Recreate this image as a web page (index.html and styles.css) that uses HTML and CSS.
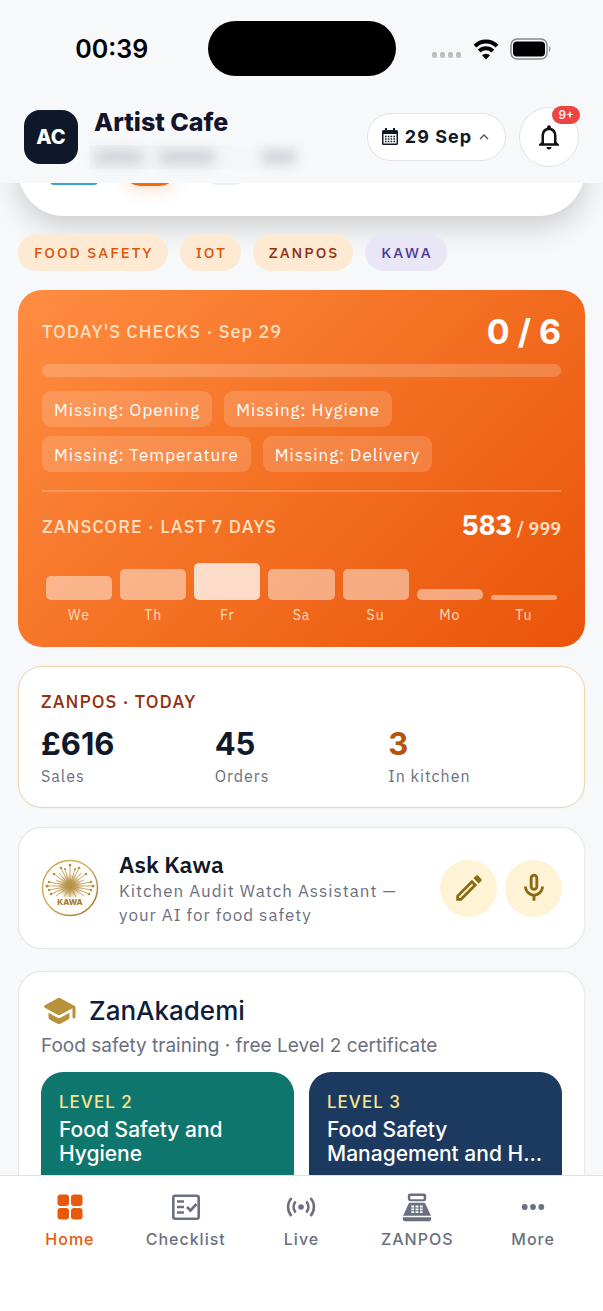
FILE: index.html
```html
<!DOCTYPE html>
<html lang="en">
<head>
<meta charset="utf-8">
<meta name="viewport" content="width=device-width, initial-scale=1">
<title>Artist Cafe</title>
<link rel="stylesheet" href="styles.css">
</head>
<body>
<div class="status">
  <div class="status-side"><time class="clock">00:39</time></div>
  <div class="island"></div>
  <div class="status-side status-icons">
    <svg width="30" height="6" viewBox="0 0 30 6" fill="#bfc0c2"><rect width="5" height="6" rx="2"/><rect x="8" width="5" height="6" rx="2"/><rect x="16" width="5" height="6" rx="2"/><rect x="24" width="5" height="6" rx="2"/></svg>
    <svg class="wifi" width="26" height="22" viewBox="0 0 26 22" fill="none" stroke="#000" stroke-width="4"><path d="M2 8.200a15.500 15.500 0 0 1 22 0"/><path d="M6.200 13a9.600 9.600 0 0 1 13.600 0"/><path d="M13 21.500l-4-4.200a6 6 0 0 1 8 0z" fill="#000" stroke="none"/></svg>
    <svg class="battery" width="42" height="22" viewBox="0 0 42 22"><rect x="1" y="1" width="36" height="20" rx="6" fill="none" stroke="#87898b" stroke-width="1.500"/><rect x="3" y="3.500" width="32" height="15" rx="4"/><path d="M39 8q3 3 0 6z" fill="#87898b"/></svg>
  </div>
</div>

<header class="top">
  <div class="avatar">AC</div>
  <div class="who">
    <h1>Artist Cafe</h1>
    <div class="redacted" aria-hidden="true"><i></i><i></i><i></i></div>
  </div>
  <button class="date" type="button">
    <svg width="16" height="18" viewBox="0 0 16 18"><path d="M3 0h2v2h6V0h2v2h1.500A1.500 1.500 0 0 1 16 3.500v12a1.500 1.500 0 0 1-1.500 1.500h-13A1.500 1.500 0 0 1 0 15.500v-12A1.500 1.500 0 0 1 1.500 2H3zM1.500 6v9.500h13V6z" fill="#111827" fill-rule="evenodd"/><path d="M3 8.500h10M3 11h10M3 13.500h10" stroke="#111827" stroke-width="1.500" stroke-dasharray="1.600 1.200"/></svg>
    <span>29 Sep</span>
    <svg width="10" height="6" viewBox="0 0 10 6" fill="none" stroke="#4b5563" stroke-width="1.400"><path d="M1 5l4-4 4 4"/></svg>
  </button>
  <button class="bell" type="button" aria-label="Notifications">
    <svg width="30" height="30" viewBox="0 0 24 24" fill="#111"><path d="M12 22c1.100 0 2-.9 2-2h-4c0 1.100.89 2 2 2zm6-6v-5c0-3.070-1.640-5.640-4.500-6.320V4c0-.83-.67-1.500-1.500-1.500s-1.500.67-1.500 1.500v.68C7.630 5.360 6 7.920 6 11v5l-2 2v1h16v-1l-2-2zm-2 1H8v-6c0-2.480 1.510-4.500 4-4.500s4 2.020 4 4.500v6z"/></svg>
    <span class="badge">9+</span>
  </button>
</header>

<main>
  <section class="hero" aria-label="Shortcuts"><i class="cyan"></i><i class="orange"></i><i class="grey"></i></section>

  <div class="chips">
    <button class="chip" type="button">FOOD SAFETY</button>
    <button class="chip" type="button">IOT</button>
    <button class="chip brown" type="button">ZANPOS</button>
    <button class="chip violet" type="button">KAWA</button>
  </div>

  <section class="checks">
    <div class="row">
      <h2 class="label">TODAY'S CHECKS · Sep 29</h2>
      <strong class="total">0 / 6</strong>
    </div>
    <div class="track"></div>
    <ul class="tags">
      <li>Missing: Opening</li>
      <li>Missing: Hygiene</li>
      <li>Missing: Temperature</li>
      <li>Missing: Delivery</li>
    </ul>
    <div class="row score">
      <h2 class="label">ZANSCORE · LAST 7 DAYS</h2>
      <p class="points"><strong>583</strong> / 999</p>
    </div>
    <div class="chart">
      <div class="col"><i style="height:24px"></i><span>We</span></div>
      <div class="col"><i style="height:31px"></i><span>Th</span></div>
      <div class="col best"><i style="height:37px"></i><span>Fr</span></div>
      <div class="col"><i style="height:31px"></i><span>Sa</span></div>
      <div class="col"><i style="height:31px"></i><span>Su</span></div>
      <div class="col"><i style="height:11px"></i><span>Mo</span></div>
      <div class="col"><i style="height:5px"></i><span>Tu</span></div>
    </div>
  </section>

  <section class="card pos">
    <h2 class="label">ZANPOS · TODAY</h2>
    <dl class="stats">
      <div><dd>£616</dd><dt>Sales</dt></div>
      <div><dd>45</dd><dt>Orders</dt></div>
      <div class="hot"><dd>3</dd><dt>In kitchen</dt></div>
    </dl>
  </section>

  <section class="card kawa">
    <svg class="kawa-logo" width="58" height="58" viewBox="0 0 58 58">
      <defs>
        <linearGradient id="gold" x1="0" y1="0" x2="1" y2="1"><stop offset="0" stop-color="#c39a45"/><stop offset=".4" stop-color="#d8b566"/><stop offset="1" stop-color="#9a7024"/></linearGradient>
        <radialGradient id="core"><stop offset="0" stop-color="#9a7228"/><stop offset=".5" stop-color="#b8924a" stop-opacity=".7"/><stop offset="1" stop-color="#c9a55c" stop-opacity="0"/></radialGradient>
      </defs>
      <circle cx="29" cy="29" r="27.500" fill="#fffefb" stroke="url(#gold)" stroke-width="1.500"/>
      <circle cx="29" cy="27" r="13" fill="url(#core)"/>
      <g stroke="#b9944a" stroke-width=".8" fill="#b58e40">
        <path d="M29 27V5M29 27l5-17M29 27l9-18M29 27l11-13M29 27l16-12M29 27l14-6M29 27l21-4M29 27h23M29 27l21 4M29 27l19 8M29 27l-5-17M29 27l-9-18M29 27l-11-13M29 27l-16-12M29 27l-14-6M29 27l-21-4M29 27H6M29 27l-21 4M29 27l-19 8M29 27l14 10M29 27l-14 10M29 27l6 11M29 27l-6 11M29 27v11"/>
        <g stroke="none"><circle cx="29" cy="6" r="1.300"/><circle cx="34" cy="10" r="1"/><circle cx="24" cy="10" r="1"/><circle cx="38" cy="9" r="1.300"/><circle cx="45" cy="15" r="1.300"/><circle cx="50" cy="23" r="1.200"/><circle cx="52" cy="27" r="1.500"/><circle cx="48" cy="35" r="1.300"/><circle cx="20" cy="9" r="1.300"/><circle cx="13" cy="15" r="1.300"/><circle cx="8" cy="23" r="1.200"/><circle cx="6" cy="27" r="1.500"/><circle cx="10" cy="35" r="1.300"/><circle cx="50" cy="31" r="1.200"/><circle cx="8" cy="31" r="1.200"/></g>
      </g>
      <rect x="16" y="39" width="26" height="8" fill="#fffefb"/>
      <text x="29" y="46" text-anchor="middle" class="kawa-word">KAWA</text>
    </svg>
    <div class="kawa-text">
      <h2>Ask Kawa</h2>
      <p>Kitchen Audit Watch Assistant — your AI for food safety</p>
    </div>
    <div class="actions">
      <button type="button" aria-label="Write"><svg width="34" height="34" viewBox="0 0 24 24"><path d="M14.060 9.020l.92.92L5.920 19H5v-.92l9.060-9.060M17.660 3c-.25 0-.51.1-.7.29l-1.830 1.830 3.750 3.750 1.830-1.830c.39-.39.39-1.020 0-1.410l-2.340-2.340c-.2-.2-.45-.29-.71-.29zm-3.600 3.190L3 17.250V21h3.750L17.810 9.940l-3.750-3.750z"/></svg></button>
      <button type="button" aria-label="Speak"><svg width="34" height="34" viewBox="0 0 24 24"><path d="M12 14c1.660 0 3-1.340 3-3V5c0-1.660-1.340-3-3-3S9 3.340 9 5v6c0 1.660 1.340 3 3 3zm-1-9c0-.55.45-1 1-1s1 .45 1 1v6c0 .55-.45 1-1 1s-1-.45-1-1V5zm6 6c0 2.760-2.240 5-5 5s-5-2.240-5-5H5c0 3.530 2.610 6.430 6 6.920V21h2v-3.080c3.390-.49 6-3.390 6-6.920h-2z"/></svg></button>
    </div>
  </section>

  <section class="card akademi">
    <div class="akademi-head">
      <svg width="36" height="36" viewBox="0 0 24 24" fill="#b8923a"><path d="M5 13.180v2.810c0 .73.4 1.410 1.040 1.760l5 2.730c.6.33 1.320.33 1.920 0l5-2.730c.64-.35 1.040-1.030 1.040-1.760v-2.810l-6.040 3.300c-.6.33-1.320.33-1.920 0L5 13.180zm6.040-9.660l-8.430 4.600c-.69.38-.69 1.380 0 1.760l8.430 4.600c.6.33 1.320.33 1.920 0L21 10.090V16c0 .55.45 1 1 1s1-.45 1-1V9.590c0-.37-.2-.7-.52-.88l-9.520-5.190c-.6-.32-1.320-.32-1.920 0z"/></svg>
      <h2>ZanAkademi</h2>
    </div>
    <p class="akademi-sub">Food safety training · free Level 2 certificate</p>
    <div class="courses">
      <a class="course" href="#level-2"><span>LEVEL 2</span><b>Food Safety and Hygiene</b></a>
      <a class="course navy" href="#level-3"><span>LEVEL 3</span><b>Food Safety Management and H...</b></a>
    </div>
  </section>
</main>

<nav class="tabs" aria-label="Main">
  <a class="on" href="#home"><svg width="34" height="34" viewBox="0 0 34 34"><rect x="4.500" y="4.500" width="11.500" height="11.500" rx="3"/><rect x="18" y="4.500" width="11.500" height="11.500" rx="3"/><rect x="4.500" y="18" width="11.500" height="11.500" rx="3"/><rect x="18" y="18" width="11.500" height="11.500" rx="3"/></svg>Home</a>
  <a href="#checklist"><svg width="34" height="34" viewBox="0 0 34 34" fill="none" stroke="#6b7080" stroke-width="2.600"><rect x="4.300" y="5.800" width="25.400" height="22.900" rx="2"/><path d="M8 11.500h7M8 17h7M8 22.500h7M18 17l3.500 3.500 6-6.500"/></svg>Checklist</a>
  <a href="#live"><svg width="34" height="34" viewBox="0 0 34 34" fill="none" stroke="#6b7080" stroke-width="2.600"><circle cx="17" cy="17" r="2.800" fill="#6b7080" stroke="none"/><path d="M11.700 11.500a8 8 0 0 0 0 11M22.300 11.500a8 8 0 0 1 0 11M7.500 8a13.500 13.500 0 0 0 0 18M26.500 8a13.500 13.500 0 0 1 0 18"/></svg>Live</a>
  <a href="#zanpos"><svg width="34" height="34" viewBox="0 0 24 24"><path fill-rule="evenodd" d="M17 2.500H7c-1.100 0-1.500.9-1.500 1.500v2c0 1.100.9 2 1.500 2h10c1.100 0 1.500-.9 1.500-2V4c0-.6-.4-1.500-1.500-1.500zm-.3 4H7.300V4.200h9.400zM20.500 22h-17c-1.100 0-1.500-.9-1.500-1.500V19.300h20v1.200c0 .6-.4 1.500-1.500 1.500zm-2.300-11.810C17.900 9.470 17.400 9 16.600 9H7.400c-.8 0-1.300.47-1.600 1.190L2.200 18.200h19.600zM8 11h2v1.300H8zm3 0h2v1.300h-2zm3 0h2v1.300h-2zm-6 2h2v1.300H8zm3 0h2v1.300h-2zm3 0h2v1.300h-2zm-6 2h2v1.300H8zm3 0h2v1.300h-2zm3 0h2v1.300h-2z"/></svg>ZANPOS</a>
  <a href="#more"><svg width="34" height="34" viewBox="0 0 34 34"><circle cx="8.700" cy="17" r="2.900"/><circle cx="17" cy="17" r="2.900"/><circle cx="25.300" cy="17" r="2.900"/></svg>More</a>
</nav>
</body>
</html>
```
FILE: styles.css
```css
* { box-sizing: border-box; margin: 0; padding: 0; }
:root {
  --plex: "IBM Plex Sans", "Noto Sans", sans-serif;
  --inter: Inter, "Liberation Sans", sans-serif;
}
body {
  display: flex;
  flex-direction: column;
  height: 100vh;
  overflow: hidden;
  background: #f7f8fa;
  color: #111827;
  font-family: var(--plex);
}
button { border: 0; font: inherit; color: inherit; cursor: pointer; }
a { color: inherit; text-decoration: none; }
svg { display: block; flex: none; }

.status { display: grid; grid-template-columns: 1fr auto 1fr; align-items: center; padding-top: 21px; }
.status-side { display: flex; justify-content: center; }
.clock { padding-left: 16px; color: #000; font: 600 25px/28px var(--inter); }
.island { width: 188px; height: 55px; border-radius: 28px; background: #000; }
.status-icons { align-items: center; gap: 11px; padding-right: 14px; }
.status-icons svg:first-child { margin-top: 12px; }

.top {
  position: relative;
  z-index: 1;
  display: flex;
  align-items: center;
  gap: 13px;
  padding: 28px 24px 14px;
  background: #f7f8fa;
}
.avatar {
  display: grid;
  place-items: center;
  width: 54px;
  height: 54px;
  border-radius: 16px;
  background: #0f172a;
  color: #fff;
  font: 800 20px/24px var(--inter);
}
.who { flex: 1; padding: 2px 0 0 3px; }
.who h1 { font: 800 25px/32px var(--inter); color: #14152a; white-space: nowrap; }
.redacted { display: flex; align-items: center; gap: 18px; width: 210px; height: 24px; padding-left: 6px; margin: 7px 0 0 -4px; background: linear-gradient(90deg, #f1f2f5, #f3f4f6 50%, #f7f8fa); }
.redacted i { width: 46px; height: 14px; background: #d0d2d8; filter: blur(6px); }
.redacted i + i { width: 54px; }
.redacted i:last-child { width: 34px; margin-left: 30px; }
.date {
  display: flex;
  align-items: center;
  gap: 7px;
  height: 48px;
  padding: 0 16px 0 14px;
  border: 1px solid #e1e4e8;
  border-radius: 24px;
  background: #fff;
  font: 700 18px/24px var(--inter);
  letter-spacing: 1px;
  white-space: nowrap;
}
.bell {
  position: relative;
  display: grid;
  place-items: center;
  width: 60px;
  height: 60px;
  border: 1px solid #e1e4e8;
  border-radius: 50%;
  background: #fff;
}
.badge {
  position: absolute;
  top: -2px;
  right: -2px;
  padding: 0 6px;
  border-radius: 9px;
  background: #ef4444;
  color: #fff;
  font: 500 12px/18px var(--inter);
}

main { flex: 1; min-height: 0; overflow: hidden; padding: 0 18px; }
.hero {
  display: flex;
  align-items: flex-start;
  gap: 26px;
  height: 93px;
  margin-top: -60px;
  padding: 13px 32px;
  border-radius: 50px;
  background: #fff;
  box-shadow: 0 10px 30px rgba(0, 0, 0, .18);
}
.hero i { width: 48px; height: 49px; border-radius: 4px; }
.hero .cyan { background: #35a5cc; }
.hero .orange { width: 52px; height: 50px; border-radius: 16px; background: #ea6a12; box-shadow: 0 3px 16px rgba(249, 115, 22, .25); }
.hero .grey { border-radius: 16px; background: #eeeff2; }

.chips { position: relative; display: flex; gap: 12px; margin: 18px 0 19px; }
.chip {
  padding: 7px 14px 7px 16px;
  border-radius: 19px;
  background: #feead3;
  color: #d9570f;
  font-size: 15px;
  font-weight: 500;
  line-height: 23px;
  letter-spacing: 2px;
}
.chip.brown { color: #8f2f12; }
.chip.violet { background: #e9e6f5; color: #4b3797; }

.label { font-size: 18px; font-weight: 500; line-height: 24px; letter-spacing: 1px; }
.row { display: flex; align-items: center; justify-content: space-between; }
.checks {
  padding: 24px 24px 22px;
  border-radius: 24px;
  background: linear-gradient(135deg, #ff8d42 0%, #f47023 50%, #e9540a 100%);
  color: #fff;
}
.checks .label { color: #fedfc0; }
.total { font: 700 34px/36px var(--inter); }
.track { height: 13px; margin: 14px 0; border-radius: 7px; background: rgba(255, 255, 255, .2); }
.tags { display: flex; flex-wrap: wrap; gap: 9px 12px; padding-bottom: 18px; border-bottom: 2px solid rgba(255, 255, 255, .2); list-style: none; }
.tags li { padding: 7px 12px 5px; border-radius: 9px; background: rgba(255, 255, 255, .16); font-size: 17px; line-height: 24px; letter-spacing: 1px; }
.score { padding: 15px 0 16px; }
.points { color: #fedfc0; font: 600 18px/36px var(--plex); }
.points strong { color: #fff; font-size: 28px; font-weight: 800; }
.chart { display: flex; align-items: flex-end; }
.col { flex: 1; padding: 0 4px; text-align: center; font-size: 14px; line-height: 20px; color: #fedfc0; letter-spacing: 1px; }
.col i { display: block; margin-bottom: 5px; border-radius: 5px; background: rgba(255, 255, 255, .46); }
.col.best i { background: rgba(255, 255, 255, .76); }

.card { margin-top: 19px; padding: 22px; border: 1px solid #e6e8ec; border-radius: 24px; background: #fff; box-shadow: 0 0 2px rgba(17, 24, 39, .06); }
.pos { padding: 23px 22px 20px; border-color: #eed6ae; }
.pos .label { color: #942f10; }
.stats { display: grid; grid-template-columns: repeat(3, 1fr); }
.stats > div { display: flex; flex-direction: column; }
.stats dd { margin-top: 10px; font: 700 31px/40px var(--inter); color: #111827; }
.stats dt { margin-top: 1px; font-size: 16px; line-height: 22px; letter-spacing: 1px; color: #6b7080; }
.stats .hot dd { color: #b4530b; }

.kawa { display: flex; align-items: center; gap: 20px; padding: 21px 22px; }
.kawa-word { font: 800 8px var(--inter); fill: #a67c30; }
.kawa-text { flex: 1; }
.kawa-text h2 { font-size: 23px; font-weight: 600; line-height: 30px; }
.kawa-text p { font-size: 17px; line-height: 24px; letter-spacing: 1px; color: #6b7080; }
.actions { display: flex; gap: 8px; }
.actions button { display: grid; place-items: center; width: 57px; height: 57px; border-radius: 50%; background: #fff3d6; fill: #8a6a14; }

.akademi { margin-top: 22px; padding-top: 21px; font-family: var(--inter); }
.akademi-head { display: flex; align-items: center; gap: 12px; }
.akademi-head h2 { font-size: 26px; font-weight: 500; line-height: 36px; color: #101c3c; }
.akademi-sub { padding: 5px 0 14px; font-size: 19px; line-height: 24px; color: #6b7080; }
.courses { display: grid; grid-template-columns: 1fr 1fr; gap: 15px; }
.course { padding: 18px 18px 56px; border-radius: 22px; background: #0f766e; color: #fff; }
.course.navy { background: #1c395f; }
.course span { display: block; font-size: 17px; font-weight: 500; line-height: 24px; letter-spacing: 1px; color: #fbe68c; }
.course b { display: block; margin-top: 4px; font-size: 21px; font-weight: 500; line-height: 24px; }

.tabs { display: flex; padding: 14px 12px 60px; border-top: 1px solid #dfe1e5; background: #fff; }
.tabs a { flex: 1; display: flex; flex-direction: column; align-items: center; gap: 3px; color: #6b7080; fill: #6b7080; font: 500 16px/24px var(--inter); letter-spacing: 1px; }
.tabs .on { color: #e8590c; fill: #e8590c; }
```
